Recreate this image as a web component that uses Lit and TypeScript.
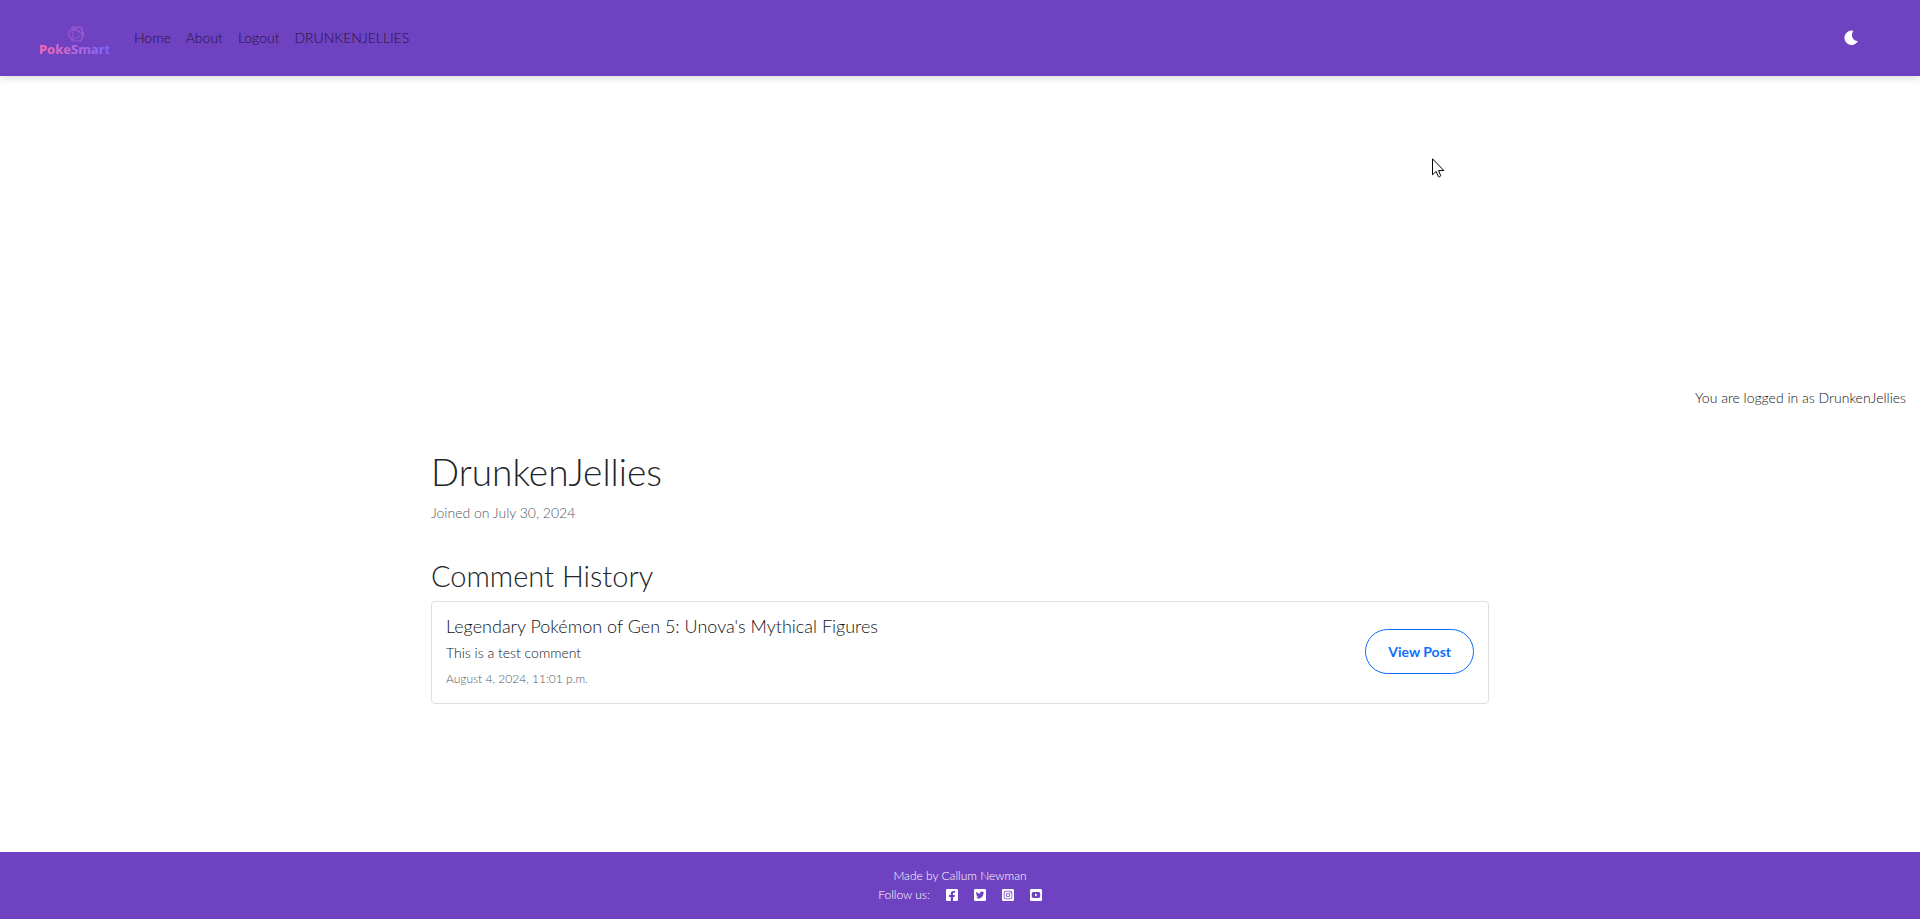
import { LitElement, html, css, svg } from "lit";
import { customElement } from "lit/decorators.js";

const socials = [
  {
    name: "Facebook",
    glyph: svg`<path fill-rule="evenodd" d="M48 32h352a48 48 0 0 1 48 48v352a48 48 0 0 1-48 48H263V328h61l12-75h-73v-40c0-22 10-41 42-41h34v-63s-31-5-60-5c-61 0-101 37-101 104v45h-68v75h68v152H48a48 48 0 0 1-48-48V80a48 48 0 0 1 48-48z"/>`,
  },
  {
    name: "Twitter",
    glyph: svg`<path fill-rule="evenodd" d="M400 32H48C21.500 32 0 53.500 0 80v352c0 26.500 21.500 48 48 48h352c26.500 0 48-21.500 48-48V80c0-26.500-21.500-48-48-48zm-48.900 158.800c.2 2.800.2 5.700.2 8.500 0 86.700-66 186.600-186.600 186.600-37.200 0-71.700-10.800-100.700-29.400 5.300.6 10.400.8 15.800.8 30.700 0 58.900-10.400 81.400-28-28.800-.6-53-19.500-61.300-45.500 10.100 1.500 19.200 1.500 29.600-1.200-30-6.100-52.500-32.500-52.500-64.400v-.8c8.700 4.900 18.900 7.900 29.600 8.300a65.450 65.450 0 0 1-29.200-54.600c0-12.200 3.200-23.400 8.900-33.100 32.300 39.800 80.800 65.800 135.200 68.600-9.300-44.500 24-80.600 64-80.600 18.900 0 35.900 7.900 47.900 20.700 14.800-2.800 29-8.300 41.600-15.800-4.900 15.200-15.200 28-28.800 36.100 13.200-1.400 26-5.100 37.800-10.200-8.900 13.100-20.100 24.700-32.900 34z"/>`,
  },
  {
    name: "Instagram",
    glyph: svg`<path fill-rule="evenodd" d="M48 32h352a48 48 0 0 1 48 48v352a48 48 0 0 1-48 48H48a48 48 0 0 1-48-48V80a48 48 0 0 1 48-48zM150 96a86 86 0 0 0-86 86v148a86 86 0 0 0 86 86h148a86 86 0 0 0 86-86V182a86 86 0 0 0-86-86zM154 125h140a61 61 0 0 1 61 61v140a61 61 0 0 1-61 61H154a61 61 0 0 1-61-61V186a61 61 0 0 1 61-61zM224 174a82 82 0 1 1 0 164 82 82 0 0 1 0-164zm0 29a53 53 0 1 0 0 106 53 53 0 0 0 0-106zM309 152a19 19 0 1 0 0 38 19 19 0 0 0 0-38z"/>`,
  },
  {
    name: "YouTube",
    glyph: svg`<path fill-rule="evenodd" d="M48 32h352a48 48 0 0 1 48 48v352a48 48 0 0 1-48 48H48a48 48 0 0 1-48-48V80a48 48 0 0 1 48-48zM224 145c-55 0-107 1-124 6-14 4-24 12-28 26-10 38-10 120 0 158 4 14 14 24 28 28 34 9 214 9 248 0 14-4 24-14 28-28 10-38 10-120 0-158-4-14-14-22-28-26-17-5-69-6-124-6z"/><path d="M187 203l95 54-95 54z"/>`,
  },
];

@customElement("app-root")
export class AppRoot extends LitElement {
  static styles = css`
    :host {
      display: flex;
      flex-direction: column;
      min-height: 100vh;
      background: #fff;
      color: #111315;
      font: 300 14px/20px Lato, sans-serif;
    }
    * {
      box-sizing: border-box;
    }
    h1, h2, h3, p {
      margin: 0;
      padding: 0;
      font-weight: inherit;
    }
    a {
      color: inherit;
      text-decoration: none;
    }
    .navbar {
      display: flex;
      align-items: center;
      min-height: 76px;
      padding: 0 61px 0 36px;
      background: #6f42c1;
      box-shadow: 0 2px 8px rgba(0, 0, 0, 0.15);
    }
    .brand {
      display: flex;
      margin-right: 20px;
    }
    .links {
      display: flex;
      flex: 1;
      gap: 15px;
      color: rgba(0, 0, 0, 0.75);
    }
    .theme {
      display: flex;
      padding: 0;
      border: 0;
      background: none;
      cursor: pointer;
    }
    .main {
      flex: 1;
    }
    .status {
      padding: 312px 14px 0 14px;
      text-align: right;
    }
    .profile {
      max-width: 1058px;
      margin: 0 auto;
      padding: 40px 0;
    }
    .name {
      color: #212529;
      font-size: 37px;
      line-height: 48px;
    }
    .joined {
      margin: 7px 0 34px;
      color: #50585f;
    }
    .heading {
      color: #212529;
      margin-bottom: 6px;
      font-size: 29px;
      line-height: 38px;
    }
    .card {
      display: flex;
      justify-content: space-between;
      align-items: center;
      padding: 12px 14px 14px;
      border: 1px solid #dfdfdf;
      border-radius: 4px;
    }
    .title {
      font-size: 18px;
      line-height: 24px;
    }
    .comment {
      margin: 5px 0 6px;
    }
    .date {
      display: block;
      font-size: 12px;
      color: #50585f;
    }
    .view {
      padding: 11px 22px;
      border: 1px solid #0d6efd;
      border-radius: 24px;
      color: #0d6efd;
      line-height: 21px;
      font-weight: 700;
    }
    .footer {
      padding: 14px 14px 15px;
      background: #6f42c1;
      color: #fff;
      text-align: center;
      font-size: 12px;
      line-height: 19px;
    }
    .follow {
      display: flex;
      justify-content: center;
      gap: 16px;
    }
    .social {
      display: flex;
      align-items: center;
    }
    .cursor {
      position: absolute;
      left: 1432px;
      top: 158px;
      pointer-events: none;
    }
  `;

  render() {
    return html`
      <header class="navbar">
        <a class="brand" href="#" aria-label="PokeSmart">
          <svg width="78" height="40" viewBox="0 0 78 40">
            <defs>
              <linearGradient id="brand" x1="0" x2="1">
                <stop offset="0" stop-color="#ff6bae" />
                <stop offset="1" stop-color="#7468ff" />
              </linearGradient>
            </defs>
            <g fill="none" stroke="#b065d8" stroke-width="0.6" stroke-linejoin="round">
              <path d="M36 9h9l3 7-3 7H36l-4-7zM37 11v11l10-6zM36 9l12 7M45 9l-8 2-5 5 5 6M45 9l2 7-2 7" />
            </g>
            <text x="3" y="36" font-family="Noto Sans, sans-serif" font-size="13" font-weight="700" fill="url(#brand)">PokeSmart</text>
          </svg>
        </a>
        <nav class="links">
          <a href="#">Home</a>
          <a href="#">About</a>
          <a href="#">Logout</a>
          <a href="#">DRUNKENJELLIES</a>
        </nav>
        <button class="theme" type="button" aria-label="Toggle dark mode">
          <svg width="16" height="16" viewBox="0 0 16 16" fill="#fff">
            <path d="M10 .7A7.200 7.200 0 1 0 14.600 11.800c.3-.3 0-.8-.4-.7A6.200 6.200 0 0 1 10 1.500c.4-.2.4-.8 0-.8z" />
          </svg>
        </button>
      </header>
      <main class="main">
        <p class="status">You are logged in as DrunkenJellies</p>
        <section class="profile">
          <h1 class="name">DrunkenJellies</h1>
          <p class="joined">Joined on July 30, 2024</p>
          <h2 class="heading">Comment History</h2>
          <article class="card">
            <div>
              <h3 class="title">Legendary Pokémon of Gen 5: Unova's Mythical Figures</h3>
              <p class="comment">This is a test comment</p>
              <small class="date">August 4, 2024, 11:01 p.m.</small>
            </div>
            <a class="view" href="#">View Post</a>
          </article>
        </section>
      </main>
      <footer class="footer">
        <p>Made by Callum Newman</p>
        <div class="follow">
          <span>Follow us:</span>
          ${socials.map(
            (s) => html`<a class="social" href="#" aria-label=${s.name}>
              <svg width="12" height="14" viewBox="0 0 448 512" fill="#fff">${s.glyph}</svg>
            </a>`
          )}
        </div>
      </footer>
      <svg class="cursor" width="13" height="20" viewBox="0 0 13 20" aria-hidden="true">
        <path d="M.5.8v16l3.600-3.400 2.300 5.300c1 .4 2-.1 2.300-1L6.600 12.500h5.200z" fill="#fff" stroke="#000" stroke-width="1" />
      </svg>
    `;
  }
}
